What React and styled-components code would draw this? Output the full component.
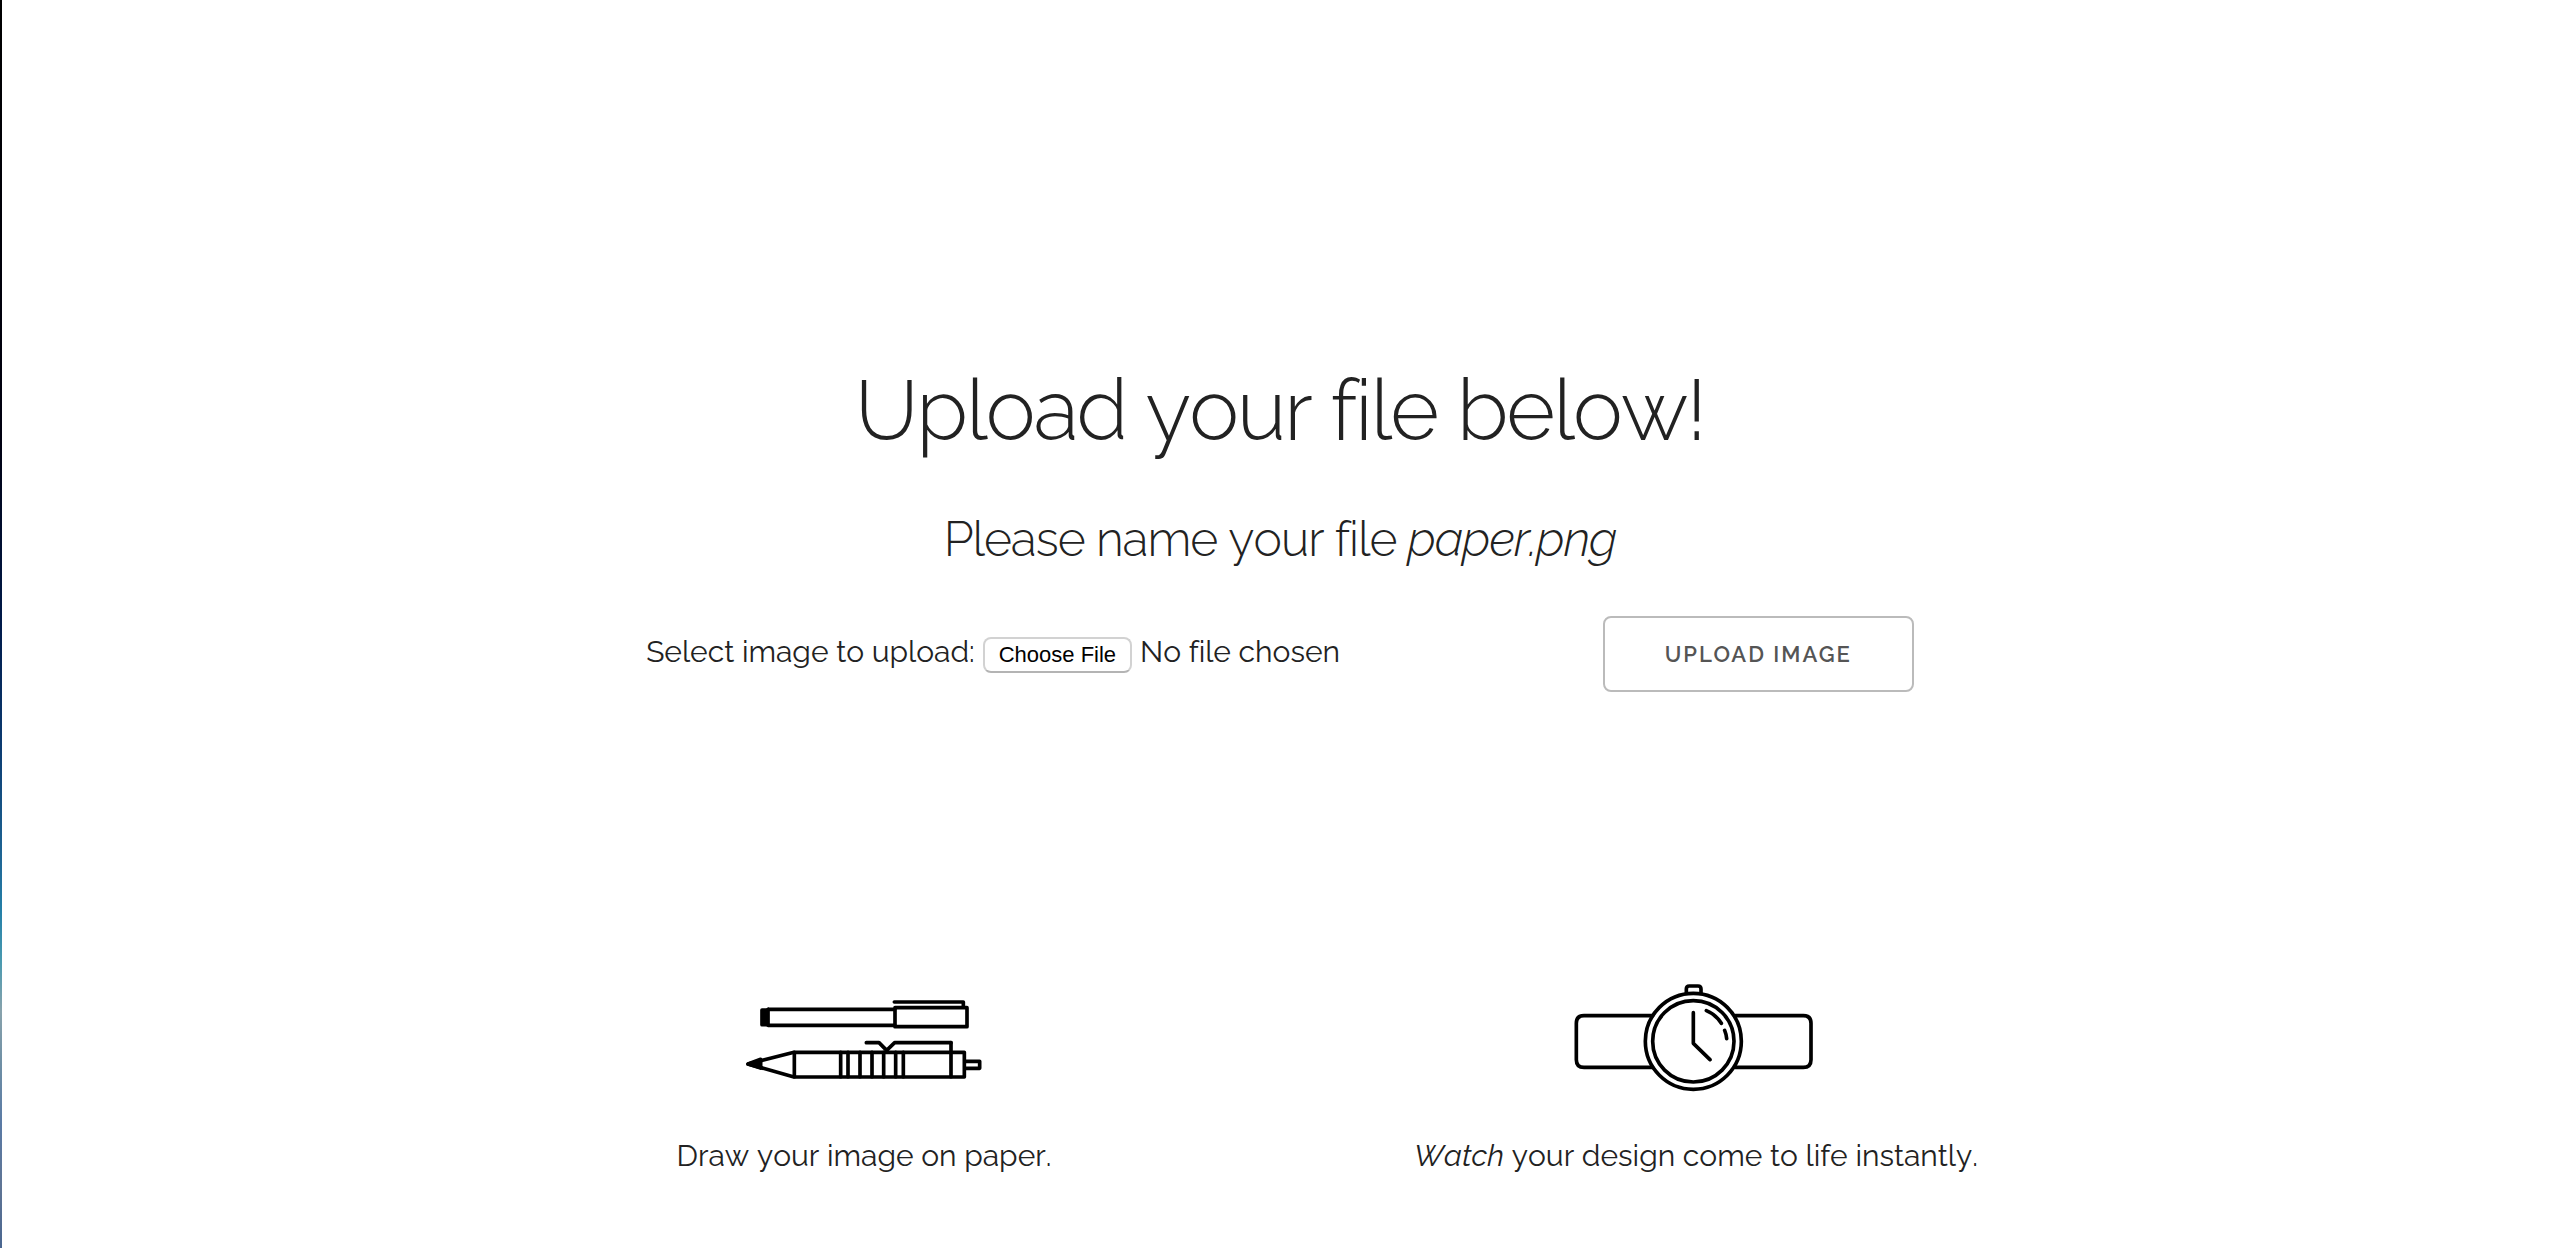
import React, { useState } from "react";
import styled, { createGlobalStyle } from "styled-components";

const GlobalStyle = createGlobalStyle`
  * {
    box-sizing: border-box;
  }

  body {
    margin: 0;
    background: #fff;
    color: #222;
    font-family: Raleway, Lato, "Open Sans", sans-serif;
    font-size: 30px;
    font-kerning: none;
    font-variant-ligatures: none;
    line-height: 48px;
  }
`;

const Page = styled.div`
  min-height: 100vh;
  border-left: 2px solid;
  border-image: linear-gradient(
      #000 0%,
      #000010 35%,
      #001a4a 50%,
      #0c3c72 60%,
      #1f6796 69%,
      #2580a8 73%,
      #4a9ab0 77%,
      #88a2ac 81%,
      #7090a5 85%,
      #5a7aa5 90%,
      #5f7595 95%,
      #4a6690 100%
    )
    1;
`;

const Container = styled.main`
  width: 100%;
  max-width: 1680px;
  margin: 0 auto;
  padding: 361px 40px 40px;
`;

const Title = styled.h1`
  margin: 0 0 42px;
  font-size: 84px;
  font-weight: 300;
  line-height: 100px;
  letter-spacing: -2px;
  text-align: center;
`;

const Subtitle = styled.h2`
  margin: 0 0 41px;
  font-size: 48px;
  font-weight: 300;
  line-height: 72px;
  letter-spacing: -1px;
  text-align: center;
`;

const UploadForm = styled.form`
  display: flex;
  flex-wrap: wrap;
  justify-content: center;
  align-items: baseline;
  gap: 8px;
  margin: 0 0 278px;
`;

const FileInput = styled.input`
  width: 612px;
  color: #222;
  font-family: inherit;
  font-size: 30px;
  font-kerning: none;
  font-variant-ligatures: none;
  line-height: 36px;

  &::file-selector-button {
    height: 36px;
    margin: 0 8px 0 0;
    padding: 0 14px;
    border: 2px solid #d2d2d2;
    border-bottom-color: #b4b4b4;
    border-radius: 8px;
    background: #fff;
    color: #000;
    font-family: "Liberation Sans", Arial, sans-serif;
    font-size: 22px;
  }
`;

const SubmitButton = styled.button`
  height: 76px;
  padding: 0 60px;
  border: 2px solid #bbb;
  border-radius: 8px;
  background: transparent;
  color: #555;
  font-family: inherit;
  font-size: 22px;
  font-weight: 600;
  line-height: 72px;
  letter-spacing: 2px;
  text-transform: uppercase;
  white-space: nowrap;
  cursor: pointer;

  &:hover {
    border-color: #888;
    color: #333;
  }
`;

const Steps = styled.section`
  display: grid;
  grid-template-columns: 1fr 1fr;
  gap: 64px;
`;

const Step = styled.div`
  display: flex;
  flex-direction: column;
  align-items: center;
  gap: 32px;
  text-align: center;
`;

const StepIcon = styled.svg`
  width: 270px;
  height: 130px;
  fill: none;
  stroke: #000;
  stroke-width: 11;
  stroke-linejoin: round;
  stroke-linecap: round;
`;

const Caption = styled.p`
  margin: 0;
`;

const PensIcon = () => (
  <StepIcon viewBox="-3 -30 810 390" aria-hidden="true">
    <path d="M116 88H494M116 136H494M114 88V136" />
    <path d="M96 90H112V134H96Z" fill="#000" />
    <path d="M495 83H711V140H495ZM493 66H700V80" />
    <path d="M192 217H703V291H192L54 252Z" />
    <path d="M92 238L54 252L92 264Z" fill="#000" />
    <path d="M193 217V290M332 217V290M354 217V290M390 217V290M426 217V290M461 217V290M497 217V290M520 217V290M663 188V290" />
    <path d="M409 188H447L470 211L494 188H663" />
    <path d="M706 244H749V265H706" />
  </StepIcon>
);

const WatchIcon = () => (
  <StepIcon viewBox="3 0 810 390" aria-hidden="true">
    <path d="M278 137H72Q49 137 49 160V269Q49 292 72 292H278" />
    <path d="M526 137H730Q753 137 753 160V269Q753 292 730 292H526" />
    <circle cx="400" cy="214" r="144" />
    <circle cx="400" cy="214" r="122" />
    <path d="M379 68V57Q379 48 388 48H414Q423 48 423 57V68" />
    <path d="M400 128V220L450 269M439 122Q468 134 484 160M494 181Q499 193 500 206" />
  </StepIcon>
);

const App = () => {
  const [file, setFile] = useState(null);

  const handleSubmit = (e) => {
    e.preventDefault();
    if (!file) {
      return;
    }
    console.log("Uploading", file.name);
  };

  return (
    <Page>
      <GlobalStyle />
      <Container>
        <Title>Upload your file below!</Title>
        <Subtitle>
          Please name your file <em>paper.png</em>
        </Subtitle>
        <UploadForm onSubmit={handleSubmit}>
          <label htmlFor="fileToUpload">Select image to upload:</label>
          <FileInput
            type="file"
            id="fileToUpload"
            name="fileToUpload"
            onChange={(e) => setFile(e.target.files[0])}
          />
          <SubmitButton type="submit">Upload Image</SubmitButton>
        </UploadForm>
        <Steps>
          <Step>
            <PensIcon />
            <Caption>Draw your image on paper.</Caption>
          </Step>
          <Step>
            <WatchIcon />
            <Caption>
              <em>Watch</em> your design come to life instantly.
            </Caption>
          </Step>
        </Steps>
      </Container>
    </Page>
  );
};

export default App;
